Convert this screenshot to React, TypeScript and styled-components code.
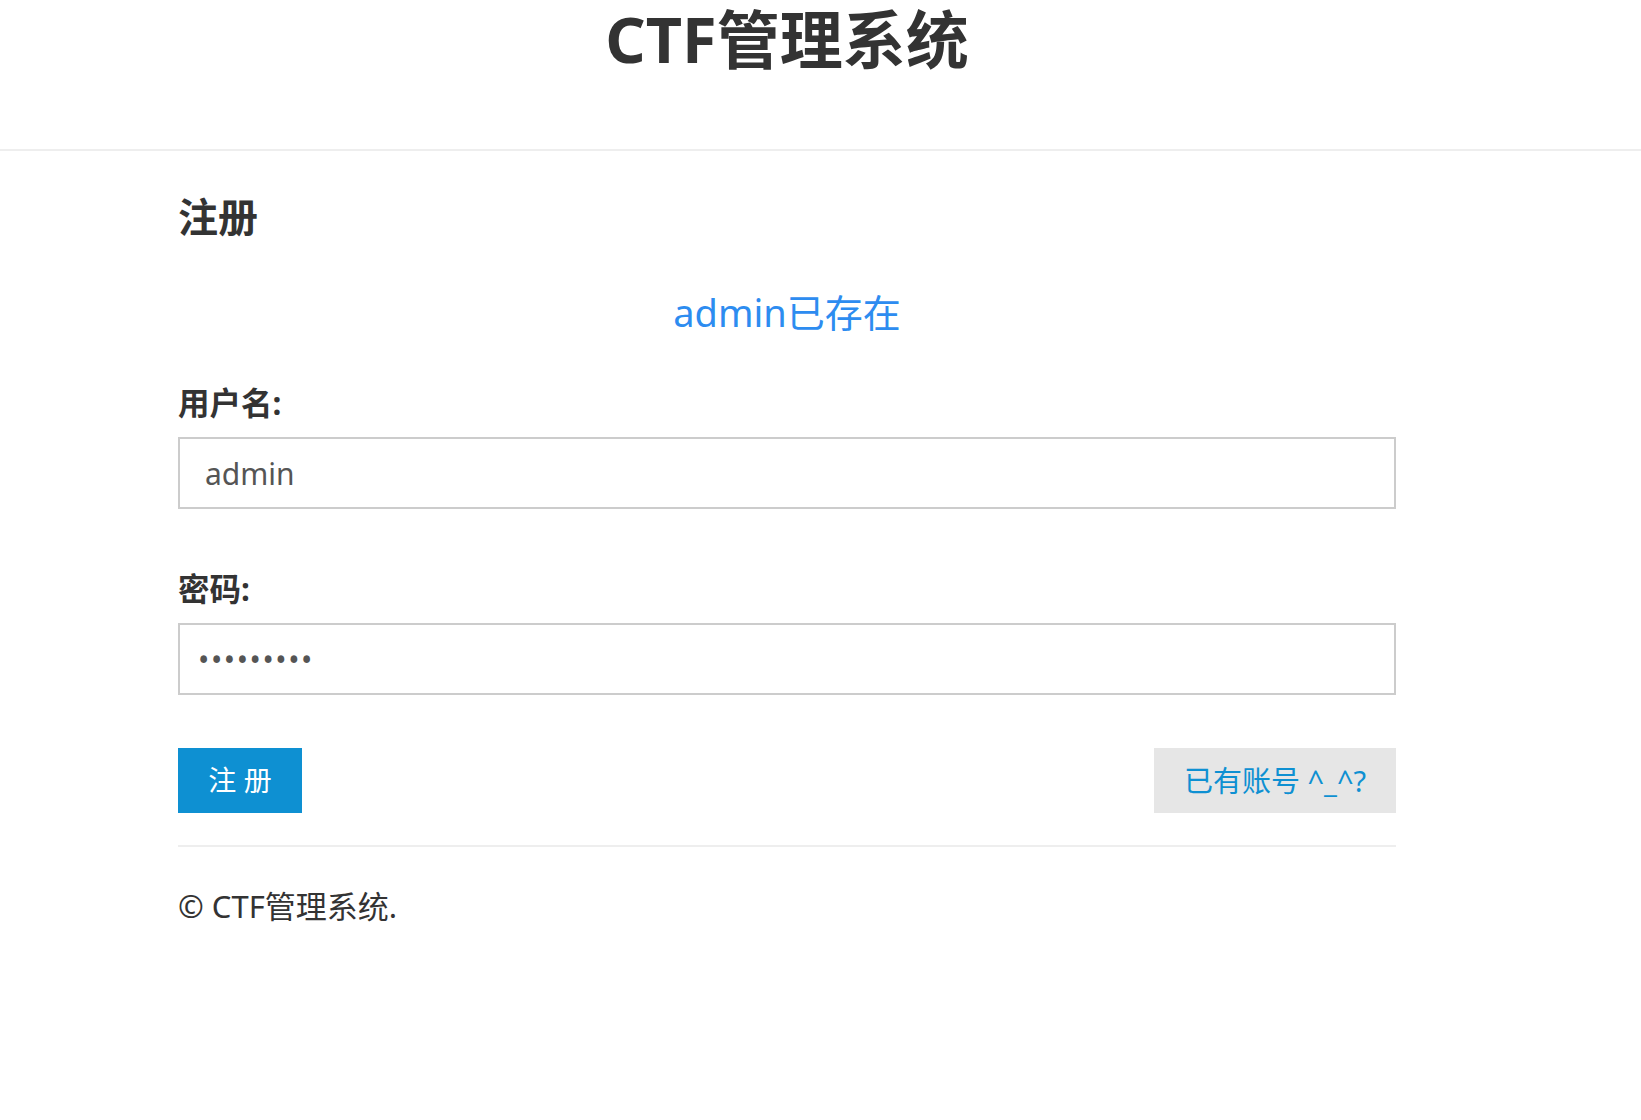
import React from "react";
import styled, { createGlobalStyle } from "styled-components";

const GlobalStyle = createGlobalStyle`
  html, body {
    margin: 0;
    padding: 0;
    background: #fff;
  }
  body {
    font-family: "Noto Sans", "Noto Sans CJK SC", sans-serif;
    color: #333;
  }
  * { box-sizing: border-box; }
`;

const Header = styled.header`
  border-bottom: 2px solid #eee;
  padding-top: 1px;
  padding-bottom: 73px;
`;

const Container = styled.div`
  margin-left: 178px;
  width: 1218px;
`;

const SiteTitle = styled.h1`
  margin: 0;
  font-size: 63px;
  line-height: 75px;
  font-weight: 700;
  text-align: center;
  color: #333;
`;

const Main = styled(Container)`
  display: flex;
  flex-direction: column;
`;

const PageTitle = styled.h2`
  margin: 42px 0 0;
  font-size: 40px;
  line-height: 48px;
  font-weight: 700;
  color: #333;
`;

const Message = styled.p`
  margin: 46px 0 0;
  font-size: 38px;
  line-height: 50px;
  color: #2d8cf0;
  text-align: center;
`;

const Field = styled.div<{ $gap: number }>`
  display: flex;
  flex-direction: column;
  margin-top: ${(p) => p.$gap}px;
`;

const Label = styled.label`
  font-size: 31.5px;
  line-height: 40px;
  font-weight: 700;
  color: #333;
  margin-bottom: 14px;
`;

const Input = styled.input`
  height: 72px;
  width: 100%;
  border: 2px solid #ccc;
  padding: 0 25px;
  font-family: "Noto Sans", "Noto Sans CJK SC", sans-serif;
  font-size: 30px;
  color: #555;
  background: #fff;
  outline: none;
  border-radius: 0;
`;

const PasswordInput = styled(Input)`
  padding-left: 18px;
  letter-spacing: 1.6px;
`;

const Actions = styled.div`
  display: flex;
  justify-content: space-between;
  align-items: center;
  margin-top: 53px;
`;

const Button = styled.button<{ $variant: "primary" | "default" }>`
  height: 65px;
  border: none;
  border-radius: 0;
  font-family: "Noto Sans", "Noto Sans CJK SC", sans-serif;
  font-size: ${(p) => (p.$variant === "primary" ? "28px" : "29px")};
  line-height: 65px;
  padding: 0;
  cursor: pointer;
  background: ${(p) => (p.$variant === "primary" ? "#0e90d2" : "#e6e6e6")};
  color: ${(p) => (p.$variant === "primary" ? "#fff" : "#0e90d2")};
  width: ${(p) => (p.$variant === "primary" ? "124px" : "242px")};
`;

const Divider = styled.hr`
  margin: 32px 0 0;
  border: none;
  border-top: 2px solid #eee;
  height: 0;
`;

const Footer = styled.footer`
  margin-top: 39px;
  font-size: 31px;
  line-height: 40px;
  color: #333;
`;

export default function App() {
  return (
    <>
      <GlobalStyle />
      <Header>
        <Container>
          <SiteTitle>CTF管理系统</SiteTitle>
        </Container>
      </Header>
      <Main>
        <PageTitle>注册</PageTitle>
        <Message>admin已存在</Message>
        <Field $gap={46}>
          <Label htmlFor="username">用户名:</Label>
          <Input id="username" type="text" value="admin" readOnly />
        </Field>
        <Field $gap={60}>
          <Label htmlFor="password">密码:</Label>
          <PasswordInput id="password" type="password" value="123456789" readOnly />
        </Field>
        <Actions>
          <Button $variant="primary">注 册</Button>
          <Button $variant="default">已有账号 ^_^?</Button>
        </Actions>
        <Divider />
        <Footer>© CTF管理系统.</Footer>
      </Main>
    </>
  );
}
